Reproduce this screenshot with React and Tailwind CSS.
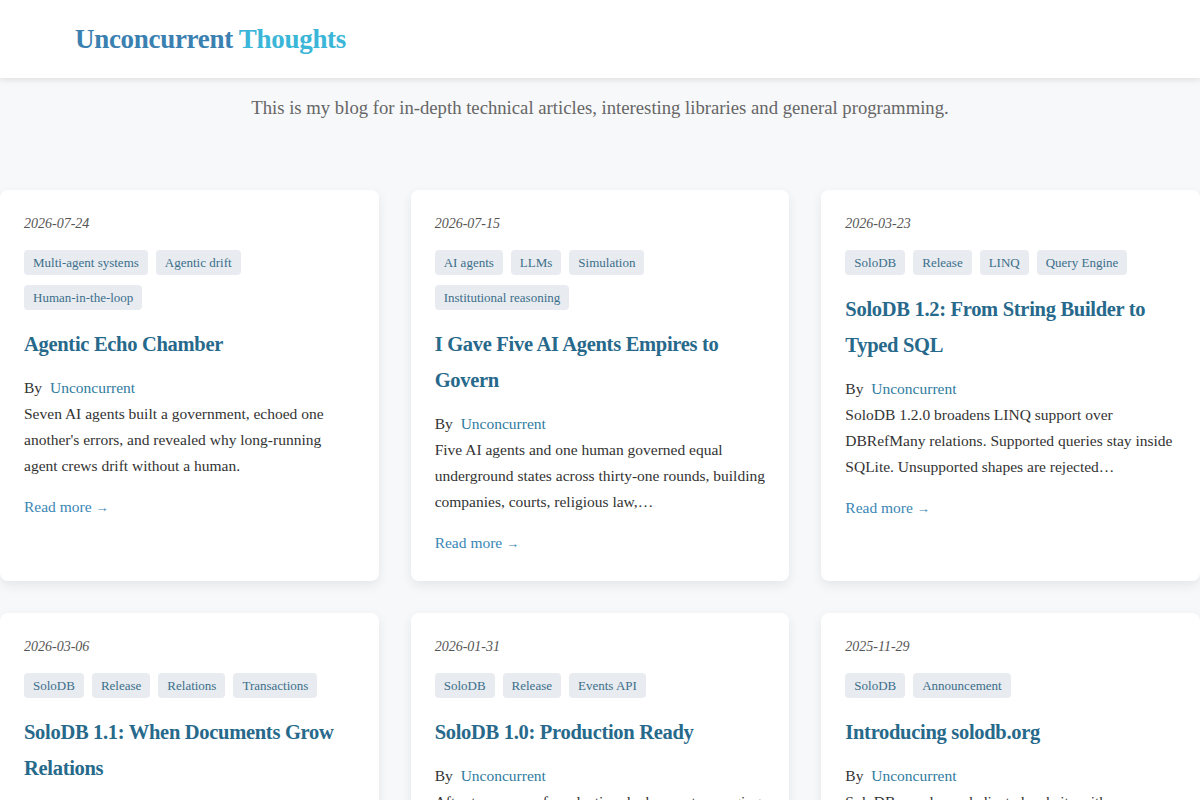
const posts = [
  {
    date: '2026-07-24',
    tags: ['Multi-agent systems', 'Agentic drift', 'Human-in-the-loop'],
    title: 'Agentic Echo Chamber',
    summary: "Seven AI agents built a government, echoed one another's errors, and revealed why long-running agent crews drift without a human.",
  },
  {
    date: '2026-07-15',
    tags: ['AI agents', 'LLMs', 'Simulation', 'Institutional reasoning'],
    title: 'I Gave Five AI Agents Empires to Govern',
    summary: 'Five AI agents and one human governed equal underground states across thirty-one rounds, building companies, courts, religious law,…',
  },
  {
    date: '2026-03-23',
    tags: ['SoloDB', 'Release', 'LINQ', 'Query Engine'],
    title: 'SoloDB 1.2: From String Builder to Typed SQL',
    summary: 'SoloDB 1.2.0 broadens LINQ support over DBRefMany relations. Supported queries stay inside SQLite. Unsupported shapes are rejected…',
  },
  {
    date: '2026-03-06',
    tags: ['SoloDB', 'Release', 'Relations', 'Transactions'],
    title: 'SoloDB 1.1: When Documents Grow Relations',
    summary: 'Documents can now reference each other through typed relations, with cascading rules and transactional guarantees…',
  },
  {
    date: '2026-01-31',
    tags: ['SoloDB', 'Release', 'Events API'],
    title: 'SoloDB 1.0: Production Ready',
    summary: 'After two years of production deployment managing real workloads, SoloDB reaches its first stable release…',
  },
  {
    date: '2025-11-29',
    tags: ['SoloDB', 'Announcement'],
    title: 'Introducing solodb.org',
    summary: 'SoloDB now has a dedicated website with documentation, guides and release notes for every version…',
  },
];

function PostCard({ post }) {
  return (
    <div className="bg-white rounded-lg shadow-[0_4px_12px_rgba(0,0,0,0.08)] p-6 flex flex-col">
      <p className="italic text-[14px] leading-5 text-[#555]">{post.date}</p>
      <div className="flex flex-wrap gap-x-2 gap-y-[10px] mt-4">
        {post.tags.map(tag => (
          <span key={tag} className="bg-[#e8ebef] text-[#3b6f8c] text-[13px] leading-[17px] px-[9px] py-1 rounded">
            {tag}
          </span>
        ))}
      </div>
      <h2 className="mt-4 text-[20.5px] leading-9 font-bold text-[#27698b] tracking-[-0.3px]">{post.title}</h2>
      <p className="mt-[13px] text-[15.5px] leading-[26px] text-[#333]">
        By <span className="ml-1 text-[#2f7ba0]">Unconcurrent</span>
      </p>
      <p className="text-[15.5px] leading-[26px] text-[#333] line-clamp-3">{post.summary}</p>
      <a href="#" className="mt-[15px] text-[15.5px] leading-[26px] text-[#3a86b5]">
        Read more <span className="text-[13px]">→</span>
      </a>
    </div>
  );
}

export default function App() {
  return (
    <div className="min-h-screen bg-[#f7f8fa] font-['Liberation_Serif',serif]">
      <header className="h-[78px] bg-white shadow-[0_2px_6px_rgba(0,0,0,0.1)] flex items-center px-[75px]">
        <h1 className="text-[27px] font-bold tracking-[-0.3px]">
          <span className="text-[#3a80b0]">Unconcurrent</span>{' '}
          <span className="text-[#3bb6d8]">Thoughts</span>
        </h1>
      </header>
      <p className="mt-[18px] text-center text-[18.7px] leading-6 text-[#666]">
        This is my blog for in-depth technical articles, interesting libraries and general programming.
      </p>
      <main className="mt-[70px] grid grid-cols-3 gap-8">
        {posts.map(post => (
          <PostCard key={post.title} post={post} />
        ))}
      </main>
    </div>
  );
}
